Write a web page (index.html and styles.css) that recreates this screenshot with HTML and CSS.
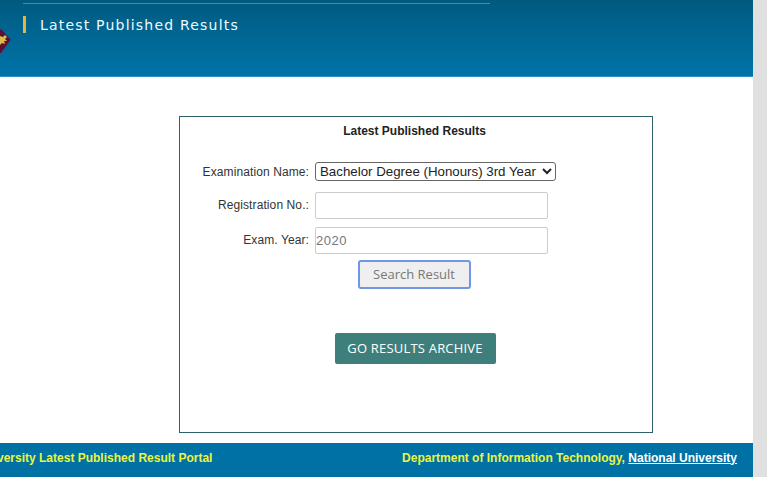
FILE: index.html
```html
<!DOCTYPE html>
<html lang="en">
<head>
    <meta charset="UTF-8">
    <meta name="viewport" content="width=device-width, initial-scale=1.0">
    <title>Latest Published Results</title>
    <link rel="stylesheet" href="styles.css">
</head>
<body>
    <div class="page">
        <header class="top-header">
            <svg class="logo" width="11" height="26" viewBox="0 0 11 26">
                <path d="M0 2 L1 1 L10.5 11.5 L9 14 L1 25 L0 25 Z" fill="#5e0f35"/>
                <path d="M0 8 L3 9 L5 7 L7 9 L5 11 L7 13 L4 13 L5 16 L2 15 L0 17 Z" fill="#dcbd4c"/>
            </svg>
            <div class="header-inner">
                <div class="header-rule"></div>
                <h1 class="page-title">Latest Published Results</h1>
            </div>
        </header>

        <main class="content">
            <div class="result-box">
                <h2 class="box-title">Latest Published Results</h2>
                <form class="result-form">
                    <div class="form-row row-select">
                        <label for="exam">Examination Name:</label>
                        <select id="exam">
                            <option>Bachelor Degree (Honours) 3rd Year</option>
                        </select>
                    </div>
                    <div class="form-row">
                        <label for="reg">Registration No.:</label>
                        <input id="reg" type="text">
                    </div>
                    <div class="form-row">
                        <label for="year">Exam. Year:</label>
                        <input id="year" type="text" placeholder="2020">
                    </div>
                    <div class="form-action">
                        <button type="button" class="search-btn">Search Result</button>
                    </div>
                </form>
                <div class="archive">
                    <a href="#" class="archive-btn">GO RESULTS ARCHIVE</a>
                </div>
            </div>
        </main>

        <footer class="bottom-footer">
            <div class="portal-name">National University Latest Published Result Portal</div>
            <div class="dept">Department of Information Technology, <a href="#">National University</a></div>
        </footer>
    </div>
    <div class="scroll-strip"></div>
</body>
</html>
```

FILE: styles.css
```css
/* General Styles */
html, body {
    height: 100%;
}

body {
    margin: 0;
    display: flex;
    overflow: hidden;
    background: #ffffff;
    color: #222;
    font-family: "Liberation Sans", Arial, sans-serif;
    font-size: 12px;
}

.page {
    width: 753px;
    height: 477px;
    display: flex;
    flex-direction: column;
    overflow: hidden;
}

.scroll-strip {
    width: 14px;
    background: #e1e0e0;
}

/* Header */
.top-header {
    position: relative;
    height: 76px;
    flex: none;
    background: linear-gradient(#005a80, #0074a8);
    border-bottom: 1px solid #2f8fc0;
}

.logo {
    position: absolute;
    left: 0;
    top: 28px;
}

.header-inner {
    width: 467px;
    margin-left: 23px;
    padding-top: 3px;
}

.header-rule {
    height: 1px;
    background: #3b8fb2;
}

.page-title {
    margin: 12px 0 0;
    padding-left: 14px;
    border-left: 3px solid #eeb334;
    height: 17px;
    line-height: 19px;
    font-family: "DejaVu Sans", Verdana, sans-serif;
    font-size: 14px;
    font-weight: normal;
    letter-spacing: 1.2px;
    color: #eefbff;
    white-space: nowrap;
}

/* Result Box */
.content {
    flex: 1;
    padding: 39px 0 0 179px;
}

.result-box {
    box-sizing: border-box;
    width: 474px;
    height: 317px;
    border: 1px solid #2d5f66;
    padding-top: 7px;
}

.box-title {
    margin: 0;
    padding-right: 3px;
    text-align: center;
    font-size: 12px;
    line-height: 14px;
    font-weight: bold;
    color: #222;
}

.result-form {
    margin-top: 24px;
}

.form-row {
    display: flex;
    align-items: center;
    gap: 6px;
    margin-bottom: 8px;
}

.row-select {
    margin-bottom: 11px;
}

.form-row label {
    width: 129px;
    padding-bottom: 2px;
    text-align: right;
    letter-spacing: 0.1px;
    color: #333;
}

.row-select label {
    padding-bottom: 0;
}

select {
    width: 241px;
    height: 19px;
    padding: 0;
    font-family: "Liberation Sans", Arial, sans-serif;
    font-size: 13.3px;
    color: #222;
    background: #fff;
    border: 1px solid #666;
    border-radius: 3px;
}

input {
    box-sizing: border-box;
    width: 233px;
    height: 27px;
    padding: 0;
    border: 1px solid #ccc;
    border-radius: 2px;
    font-family: "Liberation Sans", Arial, sans-serif;
    font-size: 13px;
    letter-spacing: 0.5px;
}

input::placeholder {
    color: #777;
}

.form-action {
    display: flex;
    justify-content: center;
    padding-right: 4px;
}

.search-btn {
    box-sizing: border-box;
    width: 113px;
    height: 29px;
    margin-top: -2px;
    padding: 0 0 2px;
    background: #efefef;
    border: 2px solid #6f97e6;
    border-radius: 3px;
    font-family: "Open Sans", sans-serif;
    font-size: 13px;
    color: #777;
}

.archive {
    display: flex;
    justify-content: center;
    padding-right: 2px;
    margin-top: 44px;
}

.archive-btn {
    width: 161px;
    height: 31px;
    line-height: 31px;
    text-align: center;
    background: #3e7f7c;
    border-radius: 2px;
    font-family: "Open Sans", sans-serif;
    font-size: 13px;
    letter-spacing: 0.2px;
    color: #fff;
    text-decoration: none;
}

/* Footer */
.bottom-footer {
    flex: none;
    height: 34px;
    display: flex;
    justify-content: space-between;
    align-items: center;
    padding: 0 16px 5px 0;
    box-sizing: border-box;
    background: #0071a5;
    font-weight: bold;
    color: #eaf542;
    white-space: nowrap;
}

.portal-name {
    margin-left: -73px;
}

.dept a {
    color: #fff;
}
```
